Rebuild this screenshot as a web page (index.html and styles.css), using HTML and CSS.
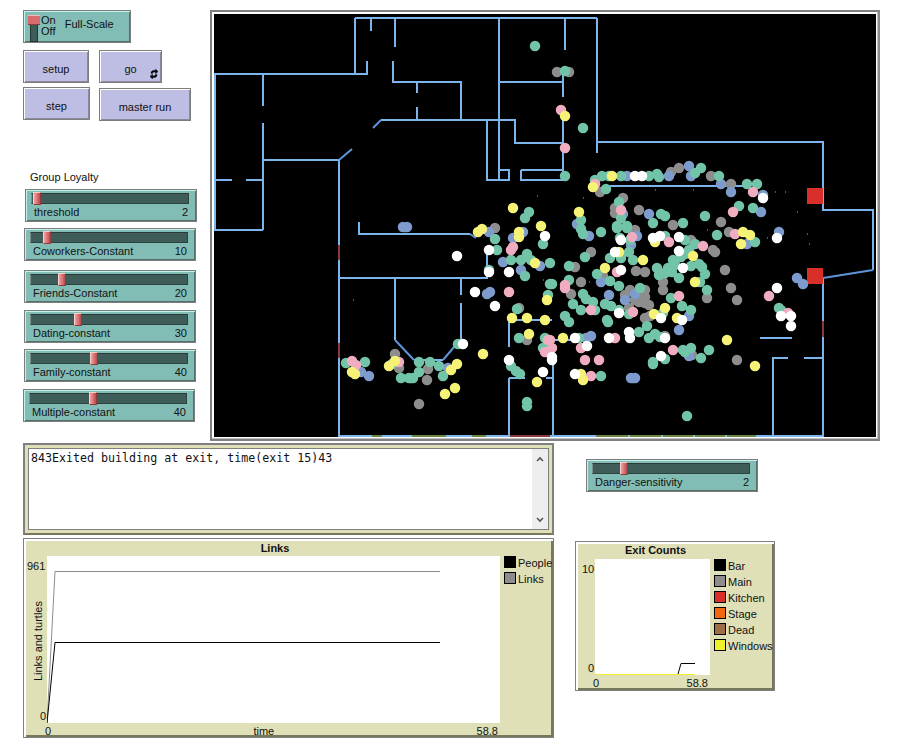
FILE: index.html
```html
<!DOCTYPE html>
<html lang="en">
<head>
    <meta charset="UTF-8">
    <title>Evacuation Model</title>
    <link rel="stylesheet" href="styles.css">
</head>
<body>
    <div class="interface">
        <div class="top">
            <div class="controls">
                <div class="switch">
                    <div class="switch-track"><div class="switch-handle"></div></div>
                    <div class="switch-states"><div>On</div><div>Off</div></div>
                    <div class="switch-name">Full-Scale</div>
                </div>
                <div class="buttons">
                    <div class="button-col">
                        <div class="button button-setup">setup</div>
                        <div class="button button-step">step</div>
                    </div>
                    <div class="button-col">
                        <div class="button button-go">go
                            <svg class="forever" viewBox="0 0 8 10"><path d="M1 4.2C1 2 3 1 5.6 1.8L5.6 0.2 8 2.6 5.6 4.6 5.6 3.3C4 2.8 2.6 3 2.4 4.4Z M7 5.8C7 8 5 9 2.4 8.2L2.4 9.8 0 7.4 2.4 5.4 2.4 6.7C4 7.2 5.4 7 5.6 5.6Z"/></svg>
                        </div>
                        <div class="button button-master">master run</div>
                    </div>
                </div>
                <div class="group-label">Group Loyalty</div>
                <div class="slider slider-threshold">
                    <div class="track"><div class="handle" style="left:1px"></div></div>
                    <div class="slider-label"><span>threshold</span><span>2</span></div>
                </div>
                <div class="slider slider-coworkers">
                    <div class="track"><div class="handle" style="left:12px"></div></div>
                    <div class="slider-label"><span>Coworkers-Constant</span><span>10</span></div>
                </div>
                <div class="slider slider-friends">
                    <div class="track"><div class="handle" style="left:27px"></div></div>
                    <div class="slider-label"><span>Friends-Constant</span><span>20</span></div>
                </div>
                <div class="slider slider-dating">
                    <div class="track"><div class="handle" style="left:43px"></div></div>
                    <div class="slider-label"><span>Dating-constant</span><span>30</span></div>
                </div>
                <div class="slider slider-family">
                    <div class="track"><div class="handle" style="left:59px"></div></div>
                    <div class="slider-label"><span>Family-constant</span><span>40</span></div>
                </div>
                <div class="slider slider-multiple">
                    <div class="track"><div class="handle" style="left:59px"></div></div>
                    <div class="slider-label"><span>Multiple-constant</span><span>40</span></div>
                </div>
            </div>

            <div class="world">
                <svg class="world-map" viewBox="214 14 662 423" width="662" height="423">
                    <!-- walls -->
                    <path class="walls" d="M355 18H597 M355 18V74 M371 18V31 M395 18V47 M214 74H367V61 M393 61V82H461V120 M417 82V93 M417 107V120 M381 120H515V143H563 M499 18V180 M499 82H563 M563 68V97 M563 120V180 M487 120V180H509V170H499 M521 170H563 M521 170V180H563 M597 18V153 M565 18V50 M597 142H823V210H873V270 M823 278V437 M215 74V230H263 M263 74V106 M263 123V230 M215 180H232 M246 180H263 M263 160H339V437 M610 186H750 M359 222V234H470 M487 254V278H339 M395 278V340 M414 360H443 M461 278V295 M461 303V340 M510 320H552 M509 320V347 M509 378V437 M509 378H525 M546 378H553 M553 365V437 M553 340H575 M760 338H792 M773 437V358H788 M804 358H823 M339 436H823"/>
                    <path class="walls-diagonal" d="M381 120L373 128 M339 160L352 149 M395 340L414 360 M443 360L460 340 M470 234L476 238 M873 270L823 278"/>
                    <!-- exits -->
                    <path class="exit-green" d="M372 436H382 M412 436H446 M472 436H486 M596 436H628 M630 436H661 M663 436H693 M695 436H725 M727 436H756"/>
                    <path class="exit-red" d="M510 436H550 M339 245V260 M339 343V358 M823 321V337"/>
                    <rect class="fire" x="807" y="188" width="16" height="16"/>
                    <rect class="fire" x="807" y="268" width="16" height="16"/>
                    <path class="specks" d="M537 196h1 M583 198h1 M655 190h1 M693 190h1 M775 192h1 M785 192h1 M797 212h1 M811 200h1 M353 300h1 M543 280h1 M707 230h1 M767 238h1 M807 234h1 M809 244h1 M589 282h1"/>
                    <!-- people -->
                    <path class="dot dot-gray" d="M495 228h0 M519 308h0 M527 340h0 M395 354h0 M399 368h0 M428 369h0 M427 380h0 M419 404h0 M557 72h0 M569 72h0 M671 172h0 M679 168h0 M711 176h0 M731 184h0 M600 192h0 M623 198h0 M615 208h0 M615 213h0 M639 210h0 M721 222h0 M673 225h0 M635 230h0 M729 232h0 M691 240h0 M713 250h0 M715 252h0 M591 252h0 M575 267h0 M636 271h0 M645 272h0 M725 270h0 M603 276h0 M581 282h0 M663 282h0 M663 290h0 M731 288h0 M707 298h0 M737 300h0 M571 294h0 M630 290h0 M625 295h0 M645 290h0 M645 297h0 M640 295h0 M635 300h0 M645 303h0 M639 302h0 M649 305h0 M629 308h0 M645 318h0 M650 316h0 M665 336h0 M692 355h0 M737 360h0"/>
                    <path class="dot dot-blue" d="M403 227h0 M407 227h0 M487 294h0 M490 292h0 M503 262h0 M521 270h0 M540 266h0 M513 238h0 M523 232h0 M489 232h0 M361 372h0 M369 376h0 M448 368h0 M627 176h0 M669 176h0 M689 166h0 M691 176h0 M721 184h0 M731 192h0 M763 195h0 M623 214h0 M649 214h0 M761 212h0 M577 224h0 M579 225h0 M589 236h0 M637 236h0 M631 245h0 M747 244h0 M779 232h0 M601 282h0 M797 278h0 M803 284h0 M609 295h0 M625 300h0 M635 294h0 M689 316h0 M679 330h0 M591 336h0 M586 338h0 M689 356h0 M631 378h0 M635 378h0"/>
                    <path class="dot dot-green" d="M535 46h0 M565 71h0 M583 128h0 M565 176h0 M595 180h0 M602 176h0 M609 176h0 M621 176h0 M649 176h0 M657 174h0 M659 177h0 M701 168h0 M695 173h0 M719 176h0 M747 184h0 M757 184h0 M606 189h0 M619 202h0 M621 218h0 M661 214h0 M665 216h0 M705 216h0 M739 206h0 M753 208h0 M581 220h0 M529 212h0 M525 218h0 M653 223h0 M683 223h0 M617 226h0 M627 226h0 M495 239h0 M497 250h0 M511 260h0 M521 260h0 M531 260h0 M527 254h0 M543 244h0 M525 276h0 M517 309h0 M550 263h0 M550 284h0 M548 295h0 M519 338h0 M545 338h0 M543 348h0 M346 363h0 M365 362h0 M392 364h0 M419 362h0 M430 362h0 M439 366h0 M419 372h0 M401 378h0 M409 378h0 M413 378h0 M443 376h0 M511 366h0 M516 371h0 M520 374h0 M527 402h0 M527 406h0 M458 344h0 M489 270h0 M581 229h0 M583 234h0 M601 232h0 M617 228h0 M627 228h0 M620 238h0 M630 240h0 M717 235h0 M755 242h0 M665 236h0 M685 240h0 M695 244h0 M585 257h0 M629 252h0 M610 258h0 M621 258h0 M633 260h0 M689 250h0 M685 254h0 M681 257h0 M673 260h0 M691 266h0 M699 264h0 M702 267h0 M705 274h0 M569 266h0 M657 268h0 M659 275h0 M665 273h0 M668 268h0 M672 272h0 M675 265h0 M679 278h0 M597 274h0 M610 281h0 M569 280h0 M552 284h0 M619 286h0 M700 282h0 M707 290h0 M583 294h0 M586 299h0 M573 304h0 M581 310h0 M593 302h0 M605 304h0 M611 306h0 M640 288h0 M671 298h0 M682 306h0 M691 310h0 M619 310h0 M629 314h0 M595 310h0 M663 313h0 M565 316h0 M569 322h0 M607 320h0 M608 322h0 M647 326h0 M639 332h0 M649 338h0 M655 334h0 M660 337h0 M579 338h0 M683 350h0 M691 348h0 M685 352h0 M709 350h0 M701 358h0 M665 359h0 M653 362h0 M653 364h0 M601 376h0 M687 416h0 M779 308h0 M781 310h0"/>
                    <path class="dot dot-pink" d="M513 247h0 M511 250h0 M509 292h0 M352 361h0 M356 365h0 M399 362h0 M548 340h0 M545 352h0 M561 110h0 M565 148h0 M595 184h0 M753 192h0 M621 210h0 M733 212h0 M632 237h0 M735 234h0 M669 242h0 M703 246h0 M617 272h0 M565 285h0 M565 288h0 M769 296h0 M679 296h0 M633 312h0 M591 310h0 M615 338h0 M550 340h0 M581 348h0 M552 348h0 M585 360h0 M599 360h0 M673 350h0 M591 376h0 M788 313h0"/>
                    <path class="dot dot-yellow" d="M478 232h0 M482 229h0 M519 232h0 M519 237h0 M541 226h0 M535 263h0 M512 318h0 M527 318h0 M545 320h0 M547 300h0 M529 334h0 M483 354h0 M457 364h0 M451 370h0 M455 388h0 M445 394h0 M537 382h0 M389 366h0 M352 372h0 M355 374h0 M395 361h0 M565 116h0 M612 176h0 M593 187h0 M579 212h0 M513 208h0 M743 232h0 M750 235h0 M741 244h0 M655 242h0 M619 252h0 M643 260h0 M693 256h0 M605 268h0 M695 282h0 M665 308h0 M654 314h0 M677 318h0 M563 338h0 M727 340h0 M755 366h0 M581 374h0 M583 380h0"/>
                    <path class="dot dot-white" d="M457 256h0 M489 250h0 M489 272h0 M509 272h0 M475 292h0 M495 306h0 M463 344h0 M509 360h0 M543 372h0 M545 236h0 M635 176h0 M642 176h0 M763 198h0 M621 240h0 M777 238h0 M653 238h0 M660 236h0 M679 237h0 M615 252h0 M679 251h0 M621 270h0 M683 268h0 M777 288h0 M619 313h0 M661 318h0 M682 320h0 M629 332h0 M630 338h0 M609 338h0 M665 338h0 M575 338h0 M587 346h0 M552 357h0 M552 360h0 M661 356h0 M575 374h0 M791 316h0 M781 316h0 M791 326h0"/>
                </svg>
            </div>
        </div>

        <div class="bottom">
            <div class="bottom-left">
                <div class="output">
                    <div class="output-inner">
                        <div class="output-text">843Exited building at exit, time(exit 15)43</div>
                        <div class="scrollbar">
                            <svg viewBox="0 0 8 6" class="chevron"><path d="M1 5L4 2L7 5"/></svg>
                            <svg viewBox="0 0 8 6" class="chevron"><path d="M1 1L4 4L7 1"/></svg>
                        </div>
                    </div>
                </div>
                <div class="plot plot-links">
                    <div class="plot-title">Links</div>
                    <div class="axis-y">
                        <span class="axis-max">961</span>
                        <span class="axis-name">Links and turtles</span>
                        <span class="axis-min">0</span>
                    </div>
                    <svg class="plot-canvas" viewBox="47 556 453 167" width="453" height="167">
                        <path class="line-gray" d="M47 723L55 571.5H440"/>
                        <path class="line-black" d="M47 723L55 642.5H440"/>
                    </svg>
                    <div class="legend">
                        <div class="legend-row"><span class="swatch swatch-black"></span>People</div>
                        <div class="legend-row"><span class="swatch swatch-gray"></span>Links</div>
                    </div>
                    <div class="axis-x"><span>0</span><span>time</span><span>58.8</span></div>
                </div>
            </div>

            <div class="bottom-right">
                <div class="slider slider-danger">
                    <div class="track"><div class="handle" style="left:27px"></div></div>
                    <div class="slider-label"><span>Danger-sensitivity</span><span>2</span></div>
                </div>
                <div class="plot plot-exits">
                    <div class="plot-title">Exit Counts</div>
                    <div class="axis-y">
                        <span class="axis-max">10</span>
                        <span class="axis-min">0</span>
                    </div>
                    <svg class="plot-canvas" viewBox="595 559 115 116" width="115" height="116">
                        <path class="line-black" d="M678 674L681 663.5H695"/>
                        <path class="line-yellow" d="M595 674.5H695"/>
                    </svg>
                    <div class="legend">
                        <div class="legend-row"><span class="swatch swatch-black"></span>Bar</div>
                        <div class="legend-row"><span class="swatch swatch-gray"></span>Main</div>
                        <div class="legend-row"><span class="swatch swatch-red"></span>Kitchen</div>
                        <div class="legend-row"><span class="swatch swatch-orange"></span>Stage</div>
                        <div class="legend-row"><span class="swatch swatch-brown"></span>Dead</div>
                        <div class="legend-row"><span class="swatch swatch-yellow"></span>Windows</div>
                    </div>
                    <div class="axis-x"><span>0</span><span>58.8</span></div>
                </div>
            </div>
        </div>
    </div>
</body>
</html>
```

FILE: styles.css
```css
body {
    margin: 0;
    background-color: #fff;
    color: #111;
    font-family: "Liberation Sans", Arial, sans-serif;
    font-size: 11px;
    line-height: 12px;
}
.interface {
    width: 897px;
    height: 756px;
    overflow: hidden;
}
.top {
    display: flex;
    padding-top: 10px;
}
.controls {
    flex: none;
    width: 187px;
    margin-left: 23px;
}

/* switch */
.switch {
    display: flex;
    box-sizing: border-box;
    width: 108px;
    height: 33px;
    background-color: #82bdb5;
    border: 1px solid #7d7d7d;
    box-shadow: inset 1px 1px #c5f1ec, inset -1px -1px #55706b;
}
.switch-track {
    position: relative;
    width: 8px;
    height: 27px;
    margin: 4px 0 0 6px;
    background-color: #3f5d58;
    border: 1px solid #25332f;
    box-sizing: border-box;
}
.switch-handle {
    position: absolute;
    top: -1px;
    left: -3px;
    width: 12px;
    height: 8px;
    background-color: #d96b6e;
    border-top: 1px solid #f3b9b9;
    border-bottom: 1px solid #8d3b3b;
}
.switch-states {
    margin: 4px 0 0 3px;
    line-height: 11px;
}
.switch-name {
    margin: 7px 0 0 9px;
}

/* buttons */
.buttons {
    display: flex;
    margin-top: 7px;
}
.button-col {
    width: 76px;
}
.button {
    position: relative;
    box-sizing: border-box;
    height: 33px;
    padding-top: 4px;
    display: flex;
    align-items: center;
    justify-content: center;
    background-color: #bebde3;
    border: 1px solid #7d7d7d;
    box-shadow: inset 1px 1px #fff, inset -1px -1px #8a8a9c;
}
.button-setup { width: 66px; }
.button-step { width: 67px; margin-top: 4px; }
.button-go { width: 63px; }
.button-master { width: 92px; margin-top: 5px; }
.forever {
    position: absolute;
    right: 3px;
    bottom: 3px;
    width: 8px;
    height: 10px;
    fill: #000;
    stroke: #000;
    stroke-width: 0.6;
}

.group-label {
    margin: 50px 0 6px 7px;
}

/* sliders */
.slider {
    box-sizing: border-box;
    width: 172px;
    height: 33px;
    padding: 3px 7px 0 5px;
    background-color: #82bdb5;
    border: 1px solid #7d7d7d;
    box-shadow: inset 1px 1px #c5f1ec, inset -1px -1px #55706b;
}
.slider-threshold { margin-left: 2px; }
.slider-coworkers { margin: 6px 0 0 1px; }
.slider-friends { margin: 9px 0 0 1px; }
.slider-dating { margin: 7px 0 0 1px; }
.slider-family { margin: 6px 0 0 1px; }
.slider-multiple { margin-top: 7px; }
.track {
    position: relative;
    box-sizing: border-box;
    height: 11px;
    background-color: #3f5d58;
    border: 1px solid #2d423e;
    border-left-color: #7b8f8b;
    border-top-color: #2a3a37;
}
.handle {
    position: absolute;
    top: -2px;
    box-sizing: border-box;
    width: 8px;
    height: 13px;
    background: linear-gradient(90deg, #f0a3a3, #d96b6e 60%, #b04c4c);
    border: 1px solid #8d3b3b;
    border-left-color: #f5d0cd;
    border-top-color: #f5d0cd;
}
.slider-label {
    display: flex;
    justify-content: space-between;
    margin-top: 2px;
    padding: 0 1px 0 3px;
}
.slider-danger {
    margin: 16px 0 0 11px;
}

/* world */
.world {
    box-sizing: border-box;
    width: 670px;
    height: 431px;
    padding: 2px;
    border: 2px solid #808080;
    border-right-color: #8c8c8c;
    background-color: #fff;
    box-shadow: inset -1px -1px #c0c0c0;
}
.world-map {
    display: block;
    background-color: #000;
}
.walls, .walls-diagonal, .exit-green, .exit-red {
    fill: none;
    stroke-width: 2;
}
.walls {
    stroke: #7cb5ec;
    shape-rendering: crispEdges;
}
.walls-diagonal {
    stroke: #5f95d8;
}
.exit-green {
    stroke: #6b8240;
    shape-rendering: crispEdges;
}
.exit-red {
    stroke: #8a3a3a;
    shape-rendering: crispEdges;
}
.fire {
    fill: #d92f2a;
}
.specks {
    stroke: #555;
    stroke-width: 2;
    fill: none;
}
.dot {
    fill: none;
    stroke-width: 10.5;
    stroke-linecap: round;
}
.dot-gray { stroke: #8d8d8d; }
.dot-blue { stroke: #7d9bcd; }
.dot-green { stroke: #72c4a8; }
.dot-pink { stroke: #efadbf; }
.dot-yellow { stroke: #f5f276; }
.dot-white { stroke: #fff; }

/* bottom row */
.bottom {
    display: flex;
    margin: 2px 0 0 23px;
}
.bottom-left {
    flex: none;
    width: 531px;
}
.bottom-right {
    margin-left: 21px;
}

/* output */
.output {
    box-sizing: border-box;
    height: 92px;
    padding: 3px;
    background-color: #dfe0b8;
    border: 2px solid #808080;
    border-bottom-color: #77775c;
}
.output-inner {
    display: flex;
    box-sizing: border-box;
    height: 100%;
    background-color: #fff;
    border: 1px solid #808080;
}
.output-text {
    flex: 1;
    padding: 2px 2px;
    font-family: "DejaVu Sans Mono", monospace;
    font-size: 11.65px;
    line-height: 14px;
}
.scrollbar {
    flex: none;
    display: flex;
    flex-direction: column;
    justify-content: space-between;
    box-sizing: border-box;
    width: 16px;
    padding: 7px 4px 6px;
    background-color: #eee;
}
.chevron {
    display: block;
    width: 8px;
    height: 6px;
    fill: none;
    stroke: #555;
    stroke-width: 1.6;
}

/* plots */
.plot {
    display: grid;
    box-sizing: border-box;
    background-color: #dfe0b8;
    border: 1px solid #808080;
    box-shadow: inset 2px 2px #fff, inset -2px -2px #77775c;
}
.plot-links {
    grid-template-columns: 21px 453px 1fr;
    grid-template-rows: 15px 167px 1fr;
    height: 200px;
    margin-top: 3px;
    padding: 2px 2px 0;
}
.plot-exits {
    grid-template-columns: 18px 115px 1fr;
    grid-template-rows: 16px 116px 1fr;
    width: 200px;
    height: 150px;
    margin-top: 49px;
    padding: 1px 1px 0;
}
.plot-title {
    grid-column: 1 / 3;
    grid-row: 1;
    font-weight: bold;
    line-height: 15px;
    text-align: center;
}
.plot-links .plot-title {
    transform: translateX(12px);
}
.plot-exits .plot-title {
    transform: translateX(12px);
}
.axis-y {
    grid-column: 1;
    grid-row: 2;
    display: flex;
    flex-direction: column;
    justify-content: space-between;
    padding: 4px 0 0 1px;
}
.axis-min {
    text-align: right;
    padding: 0 1px 1px 0;
}
.plot-exits .axis-y {
    padding: 4px 0 0 5px;
}
.axis-name {
    align-self: flex-end;
    writing-mode: vertical-rl;
    transform: rotate(180deg);
    margin-right: 3px;
    line-height: 12px;
}
.plot-canvas {
    grid-column: 2;
    grid-row: 2;
    display: block;
    background-color: #fff;
}
.line-gray, .line-black, .line-yellow {
    fill: none;
    stroke-width: 1;
}
.line-gray { stroke: #8d8d8d; }
.line-black { stroke: #000; }
.line-yellow { stroke: #eef02c; }
.legend {
    grid-column: 3;
    grid-row: 2;
    padding-left: 4px;
}
.legend-row {
    display: flex;
    align-items: flex-start;
    gap: 2px;
    height: 16px;
    line-height: 14px;
    white-space: nowrap;
}
.swatch {
    flex: none;
    box-sizing: border-box;
    width: 12px;
    height: 12px;
    border: 1px solid #000;
}
.swatch-black { background-color: #000; }
.swatch-gray { background-color: #8d8d8d; }
.swatch-red { background-color: #d92f2a; }
.swatch-orange { background-color: #f2670f; }
.swatch-brown { background-color: #9d6e48; }
.swatch-yellow { background-color: #eef02c; }
.axis-x {
    grid-column: 2;
    grid-row: 3;
    display: flex;
    justify-content: space-between;
    align-items: flex-start;
    padding: 2px 2px 0 0;
    margin-left: -2px;
}
```
